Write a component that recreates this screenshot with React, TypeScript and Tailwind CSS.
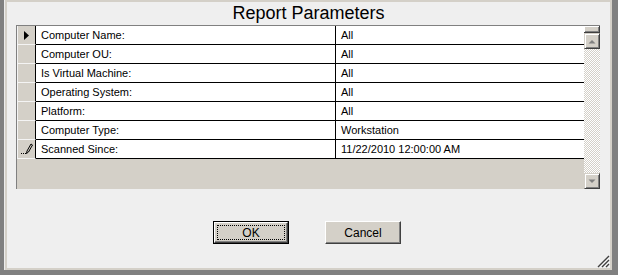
import React from "react";

const rows = [
  { label: "Computer Name:", value: "All" },
  { label: "Computer OU:", value: "All" },
  { label: "Is Virtual Machine:", value: "All" },
  { label: "Operating System:", value: "All" },
  { label: "Platform:", value: "All" },
  { label: "Computer Type:", value: "Workstation" },
  { label: "Scanned Since:", value: "11/22/2010 12:00:00 AM" },
];

function RowMarker({ index }: { index: number }) {
  if (index === 0) {
    return (
      <svg width="18" height="18" viewBox="0 0 18 18">
        <path d="M6 5 L11 9.5 L6 14 Z" fill="#000" />
      </svg>
    );
  }
  if (index === rows.length - 1) {
    // pencil = row being edited
    return (
      <svg width="18" height="18" viewBox="0 0 18 18">
        <path d="M8.5 13.5 L9 11 L13 4 L14.5 5 L10.5 12 Z" fill="none" stroke="#000" strokeWidth="1" />
        <rect x="3" y="13" width="1" height="1" fill="#000" />
        <rect x="5" y="13" width="1" height="1" fill="#000" />
        <rect x="7" y="13" width="1" height="1" fill="#000" />
      </svg>
    );
  }
  return null;
}

function ScrollButton({ dir }: { dir: "up" | "down" }) {
  return (
    <div className="h-[16px] w-[16px] bg-[#d4d0c8] border-t border-l border-[#d4d0c8] border-r border-b border-r-[#404040] border-b-[#404040] shadow-[inset_1px_1px_#ffffff,inset_-1px_-1px_#808080] flex items-center justify-center">
      <svg width="8" height="5" viewBox="0 0 8 5">
        {dir === "up" ? (
          <path d="M0.5 4.5 L4 1 L7.5 4.5 Z" fill="#808080" />
        ) : (
          <path d="M0.5 0.5 L4 4 L7.5 0.5 Z" fill="#808080" />
        )}
      </svg>
    </div>
  );
}

export default function App() {
  return (
    <div className="w-[618px] h-[275px] bg-[#808080] pl-[4px] pr-[6px] pb-[5px] font-['Liberation_Sans',Arial,sans-serif] text-black">
      <div className="h-full border-l border-[#ececec]">
        <div className="relative h-full border-2 border-l-2 border-t-2 border-[#d4d0c8] bg-[#efefef] flex flex-col">
          <div className="h-[23px] text-center text-[18px] leading-[23px]">Report Parameters</div>

          {/* parameter grid */}
          <div className="ml-[9px] mr-[10px] flex border-l border-t border-[#808080]">
            <div className="w-[567px] flex flex-col text-[11px] leading-[18px]">
              {rows.map((r, i) => (
                <div key={r.label} className="flex h-[19px]">
                  <div className="w-[19px] bg-[#d4d0c8] border-r border-black border-b border-b-[#f4f4f4] border-l border-l-[#f4f4f4]">
                    <RowMarker index={i} />
                  </div>
                  <div className="w-[300px] bg-white border-r border-b border-black pl-[5px] whitespace-nowrap">{r.label}</div>
                  <div className="flex-1 bg-white border-b border-black pl-[5px] whitespace-nowrap">{r.value}</div>
                </div>
              ))}
              <div className="h-[30px] bg-[#d4d0c8]" />
            </div>
            <div className="w-[16px] flex flex-col">
              <div className="h-[7px] bg-[#d4d0c8] border-r border-b border-[#404040] shadow-[inset_1px_1px_#ffffff,inset_-1px_-1px_#808080]" />
              <ScrollButton dir="up" />
              <div className="flex-1 bg-[repeating-conic-gradient(#ffffff_0_25%,#d4d0c8_0_50%)] bg-[length:2px_2px]" />
              <ScrollButton dir="down" />
            </div>
          </div>

          {/* buttons */}
          <div className="mt-[32px] pr-[3px] flex justify-center gap-[36px] text-[12px]">
            <button className="w-[76px] h-[23px] border border-black bg-[#d4d0c8] p-0">
              <div className="h-full border-t border-l border-white border-r border-b border-r-[#404040] border-b-[#404040] shadow-[inset_-1px_-1px_#808080] p-[2px]">
                <div className="h-full border border-dotted border-black flex items-center justify-center leading-none">OK</div>
              </div>
            </button>
            <button className="w-[76px] h-[23px] bg-[#d4d0c8] p-0 border-t border-l border-white border-r border-b border-r-[#404040] border-b-[#404040] shadow-[inset_-1px_-1px_#808080] flex items-center justify-center leading-none">
              Cancel
            </button>
          </div>

          {/* size grip */}
          <svg className="absolute right-0 bottom-0" width="13" height="13" viewBox="0 0 13 13">
            <path d="M12 1 L1 12 M12 5 L5 12 M12 9 L9 12" stroke="#404040" strokeWidth="1.4" />
            <path d="M12 3 L3 12 M12 7 L7 12" stroke="#ffffff" strokeWidth="0.8" />
          </svg>
        </div>
      </div>
    </div>
  );
}
